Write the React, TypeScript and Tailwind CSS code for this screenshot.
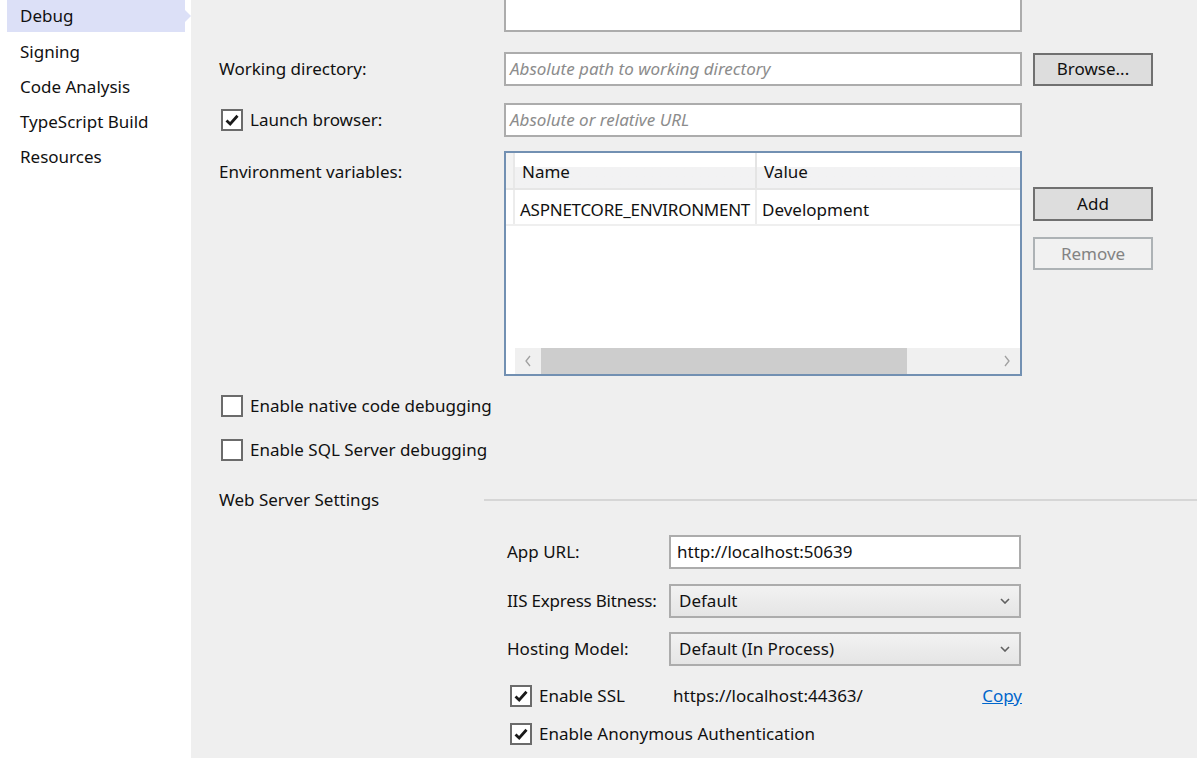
import React from 'react';

const FONT = { fontFamily: '"Noto Sans", "Open Sans", sans-serif' };

const navItems = ['Signing', 'Code Analysis', 'TypeScript Build', 'Resources'];

const CheckBox = ({ checked }: { checked?: boolean }) => (
  <span className="w-[22px] h-[22px] border-2 border-[#6b6b6b] bg-white flex items-center justify-center shrink-0">
    {checked && (
      <svg width="16" height="16" viewBox="0 0 16 16">
        <path d="M2.5 8.5 L6.2 12 L13.5 3.8" fill="none" stroke="#1a1a1a" strokeWidth="2.8" />
      </svg>
    )}
  </span>
);

const Chevron = () => (
  <svg width="10" height="6" viewBox="0 0 10 6">
    <path d="M1 1 L5 5 L9 1" fill="none" stroke="#606060" strokeWidth="1.6" />
  </svg>
);

const Combo = ({ value }: { value: string }) => (
  <div className="w-[352px] h-[34px] border-2 border-[#acacac] bg-gradient-to-b from-[#f2f2f2] to-[#e5e5e5] flex items-center pl-[8px] pr-[9px]">
    <span className="flex-1">{value}</span>
    <Chevron />
  </div>
);

export default function App() {
  return (
    <div className="w-[1197px] h-[758px] overflow-hidden flex bg-[#efefef] text-[17px] leading-[22px] text-[#111]" style={FONT}>
      {/* Left navigation */}
      <div className="w-[191px] bg-white shrink-0">
        <div className="relative ml-[7px] w-[178px] h-[32px] bg-[#dce0f7] flex items-center pl-[13px]">
          Debug
          <span className="absolute right-[-6px] top-[10px] w-0 h-0 border-y-[6px] border-y-transparent border-l-[6px] border-l-[#dce0f7]" />
        </div>
        <div className="pt-[2px]">
          {navItems.map(item => (
            <div key={item} className="h-[35px] flex items-center pl-[20px]">
              {item}
            </div>
          ))}
        </div>
      </div>

      {/* Settings page */}
      <div className="flex-1 flex flex-col">
        {/* cut-off text box at top */}
        <div className="ml-[313px] w-[518px] h-[32px] bg-white border-2 border-t-0 border-[#acacac]" />

        <div className="mt-[20px] flex items-center h-[34px]">
          <span className="w-[313px] pl-[28px]">Working directory:</span>
          <div className="w-[518px] h-[34px] bg-white border-2 border-[#acacac] flex items-center pl-[4px] italic text-[#8c8c8c]">
            Absolute path to working directory
          </div>
          <button className="ml-[11px] w-[120px] h-[33px] bg-[#dddddd] border-2 border-[#707070] flex items-center justify-center">
            Browse...
          </button>
        </div>

        <div className="mt-[17px] flex items-center h-[34px]">
          <span className="w-[313px] pl-[30px] flex items-center gap-[7px]">
            <CheckBox checked />
            Launch browser:
          </span>
          <div className="w-[518px] h-[34px] bg-white border-2 border-[#acacac] flex items-center pl-[4px] italic text-[#8c8c8c]">
            Absolute or relative URL
          </div>
        </div>

        {/* Environment variables */}
        <div className="mt-[14px] flex">
          <span className="w-[313px] pl-[28px] pt-[10px]">Environment variables:</span>
          <div className="w-[518px] h-[225px] border-2 border-[#7290b2] bg-white flex flex-col">
            <div className="flex h-[37px] border-b-2 border-[#e6e6e6] bg-gradient-to-b from-white from-40% to-[#f2f2f3] to-40%">
              <div className="w-[9px] border-r-2 border-[#e8e8e8] bg-[#f3f3f3]" />
              <div className="w-[242px] border-r-2 border-[#e4e4e4] flex items-center pl-[7px] pt-[2px]">Name</div>
              <div className="flex-1 flex items-center pl-[7px] pt-[2px]">Value</div>
            </div>
            <div className="flex h-[36px] border-b-2 border-[#efefef]">
              <div className="w-[9px] border-r-2 border-[#ececec]" />
              <div className="w-[242px] border-r-2 border-[#ececec] flex items-center pl-[5px] pt-[5px] whitespace-nowrap tracking-[-0.25px]">
                ASPNETCORE_ENVIRONMENT
              </div>
              <div className="flex-1 flex items-center pl-[5px] pt-[5px]">Development</div>
            </div>
            <div className="flex-1" />
            <div className="ml-[9px] h-[26px] bg-[#f0f0f0] flex items-center">
              <div className="w-[26px] flex items-center justify-center">
                <svg width="8" height="12" viewBox="0 0 8 12">
                  <path d="M6 1 L2 6 L6 11" fill="none" stroke="#a0a0a0" strokeWidth="1.3" />
                </svg>
              </div>
              <div className="w-[366px] h-full bg-[#cdcdcd]" />
              <div className="flex-1" />
              <div className="w-[26px] flex items-center justify-center">
                <svg width="8" height="12" viewBox="0 0 8 12">
                  <path d="M2 1 L6 6 L2 11" fill="none" stroke="#a0a0a0" strokeWidth="1.3" />
                </svg>
              </div>
            </div>
          </div>
          <div className="ml-[11px] pt-[36px] flex flex-col gap-[16px]">
            <button className="w-[120px] h-[34px] bg-[#dddddd] border-2 border-[#707070] flex items-center justify-center">
              Add
            </button>
            <button className="w-[120px] h-[33px] bg-[#f1f1f1] border-2 border-[#adb2b5] text-[#838383] flex items-center justify-center">
              Remove
            </button>
          </div>
        </div>

        <div className="mt-[19px] pl-[30px] flex items-center gap-[7px] h-[22px]">
          <CheckBox />
          Enable native code debugging
        </div>
        <div className="mt-[22px] pl-[30px] flex items-center gap-[7px] h-[22px]">
          <CheckBox />
          Enable SQL Server debugging
        </div>

        <div className="mt-[27px] flex items-center h-[24px]">
          <span className="w-[293px] pl-[28px]">Web Server Settings</span>
          <div className="flex-1 h-[2px] bg-[#d6d6d6] -mt-[1px]" />
        </div>

        <div className="ml-[316px] mt-[23px] flex flex-col">
          <div className="flex items-center h-[34px]">
            <span className="w-[162px]">App URL:</span>
            <div className="w-[352px] h-[34px] bg-white border-2 border-[#acacac] flex items-center pl-[6px]">
              http://localhost:50639
            </div>
          </div>
          <div className="mt-[15px] flex items-center h-[34px]">
            <span className="w-[162px] tracking-[-0.2px]">IIS Express Bitness:</span>
            <Combo value="Default" />
          </div>
          <div className="mt-[14px] flex items-center h-[34px]">
            <span className="w-[162px]">Hosting Model:</span>
            <Combo value="Default (In Process)" />
          </div>
          <div className="mt-[19px] flex items-center h-[22px] pl-[3px]">
            <span className="w-[163px] flex items-center gap-[7px]">
              <CheckBox checked />
              Enable SSL
            </span>
            <span className="flex-1">https://localhost:44363/</span>
            <a className="mr-[175px] text-[#0066cc] underline">Copy</a>
          </div>
          <div className="mt-[16px] flex items-center h-[22px] pl-[3px] gap-[7px]">
            <CheckBox checked />
            Enable Anonymous Authentication
          </div>
        </div>
      </div>
    </div>
  );
}
